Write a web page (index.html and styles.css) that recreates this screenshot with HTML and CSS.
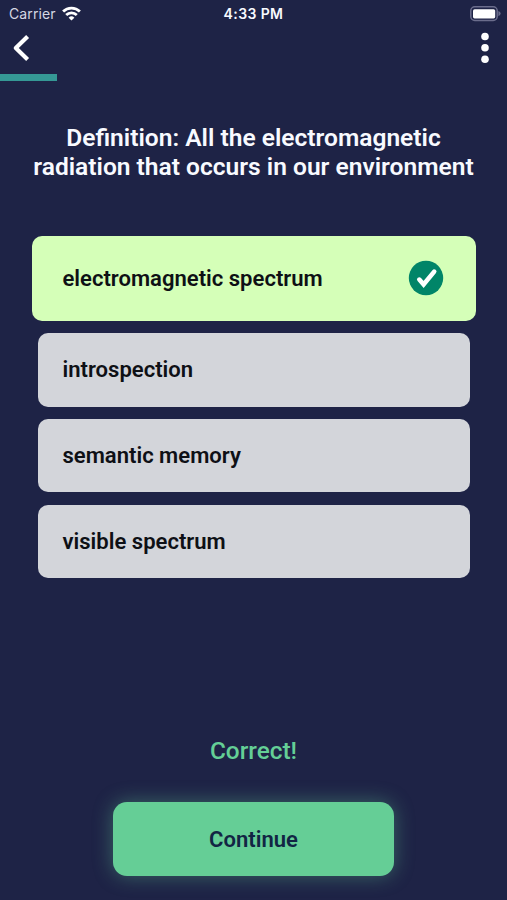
FILE: index.html
```html
<!DOCTYPE html>
<html lang="en">
<head>
  <meta charset="UTF-8">
  <meta name="viewport" content="width=device-width, initial-scale=1.0">
  <title>Quiz</title>
  <link rel="stylesheet" href="styles.css">
</head>
<body>
  <div class="screen">
    <div class="status-bar">
      <div class="carrier">
        <span>Carrier</span>
        <svg class="wifi" width="19" height="15" viewBox="0 0 19 15" fill="none" stroke="#fff" stroke-width="2.8">
          <path d="M1.1 5.6a12 12 0 0 1 16.8 0"/>
          <path d="M4.2 9a7.6 7.6 0 0 1 10.6 0"/>
          <path d="M9.5 14.6l-2.9-2.9a4.1 4.1 0 0 1 5.8 0z" fill="#fff" stroke="none"/>
        </svg>
      </div>
      <span class="time">4:33 PM</span>
      <svg class="battery" width="31" height="16" viewBox="0 0 31 16">
        <rect x="0.8" y="0.8" width="26.4" height="13.6" rx="4" fill="none" stroke="#6b6d8c" stroke-width="1.5"/>
        <rect x="3" y="3.2" width="22.2" height="9.2" rx="1.6" fill="#fff"/>
        <path d="M28.4 5q2.2 .9 2.2 2.6t-2.2 2.6z" fill="#6b6d8c"/>
      </svg>
    </div>

    <div class="nav-bar">
      <button class="icon-button" aria-label="Back">
        <svg width="18" height="28" viewBox="0 0 18 28" fill="none" stroke="#fff" stroke-width="4.2">
          <path d="M15.6 2.6L3.8 14l11.8 11.4" stroke-linejoin="round"/>
        </svg>
      </button>
      <button class="icon-button" aria-label="More">
        <svg width="8" height="32" viewBox="0 0 8 32" fill="#fff">
          <circle cx="4" cy="4.5" r="3.8"/>
          <circle cx="4" cy="15.8" r="3.8"/>
          <circle cx="4" cy="27.2" r="3.8"/>
        </svg>
      </button>
    </div>

    <div class="progress">
      <div class="progress-fill"></div>
    </div>

    <h1 class="question">Definition: All the electromagnetic<br>radiation that occurs in our environment</h1>

    <div class="answers">
      <button class="answer correct">
        <span>electromagnetic spectrum</span>
        <svg width="36" height="36" viewBox="0 0 36 36">
          <circle cx="18" cy="18" r="17.2" fill="#018568"/>
          <path d="M11.3 19.6l4.3 4.9 10.6-12.9" fill="none" stroke="#fff" stroke-width="4.6" stroke-linecap="round"/>
        </svg>
      </button>
      <button class="answer">introspection</button>
      <button class="answer">semantic memory</button>
      <button class="answer">visible spectrum</button>
    </div>

    <div class="footer">
      <p class="result">Correct!</p>
      <button class="continue">Continue</button>
    </div>
  </div>
</body>
</html>
```

FILE: styles.css
```css
* {
  margin: 0;
  padding: 0;
  box-sizing: border-box;
}

body {
  background: #1e2346;
  font-family: Roboto, sans-serif;
  color: #f8faff;
}

button {
  border: 0;
  background: none;
  font: inherit;
}

svg {
  display: block;
}

.screen {
  display: flex;
  flex-direction: column;
  height: 900px;
  overflow: hidden;
}

.status-bar {
  display: grid;
  grid-template-columns: 1fr auto 1fr;
  align-items: center;
  height: 27px;
  padding: 0 6px 0 9px;
  font-family: Inter, sans-serif;
  font-size: 14px;
}

.carrier {
  display: flex;
  align-items: center;
  gap: 6px;
  color: #d5d7e3;
  letter-spacing: 0.1px;
}

.time {
  margin-left: -3px;
  font-weight: 600;
  letter-spacing: 0.4px;
}

.battery {
  justify-self: end;
}

.nav-bar {
  display: flex;
  justify-content: space-between;
  align-items: center;
  height: 47px;
  padding: 0 18px 6px 12px;
}

.progress {
  height: 7px;
}

.progress-fill {
  width: 57px;
  height: 100%;
  background: #359895;
}

.question {
  margin-top: 43px;
  font-size: 24.55px;
  font-weight: 600;
  line-height: 28.5px;
  text-align: center;
  white-space: nowrap;
}

.answers {
  display: flex;
  flex-direction: column;
  gap: 12.4px;
  margin-top: 55px;
  padding: 0 37px 0 37.5px;
}

.answer {
  display: flex;
  justify-content: space-between;
  align-items: center;
  height: 73.2px;
  padding: 0 25px;
  border-radius: 10px;
  background: #d3d5da;
  color: #0e1015;
  font-size: 22.05px;
  font-weight: 600;
}

.answer.correct {
  height: 85px;
  margin: 0 -6px;
  padding: 0 32px 1px 31px;
  background: #d5ffb8;
}

.footer {
  display: flex;
  flex-direction: column;
  align-items: center;
  margin-top: auto;
  padding-bottom: 24px;
}

.result {
  margin-bottom: 37px;
  color: #64cf96;
  font-size: 24.4px;
  font-weight: 500;
  line-height: 28px;
}

.continue {
  width: 281px;
  height: 74px;
  border-radius: 14px;
  background: #65ce96;
  box-shadow: 0 0 20px rgba(101, 206, 150, 0.4);
  color: #122544;
  font-size: 22.05px;
  font-weight: 600;
}
```
